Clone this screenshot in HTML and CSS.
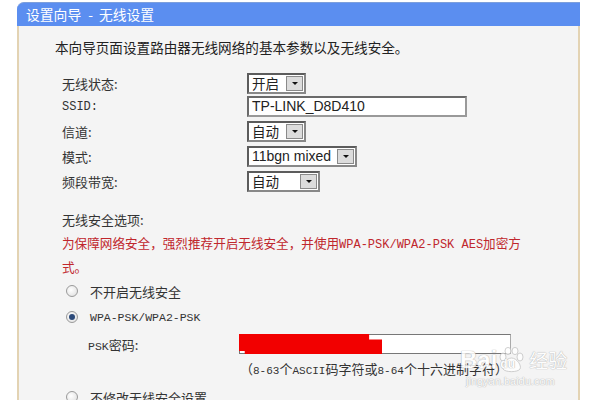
FILE: index.html
```html
<!DOCTYPE html>
<html lang="zh-CN">
<head>
<meta charset="utf-8">
<link rel="stylesheet" href="styles.css">
</head>
<body>
<div class="panel">
  <div class="title">设置向导<span class="dash">-</span>无线设置</div>
  <div class="body">
    <p class="intro">本向导页面设置路由器无线网络的基本参数以及无线安全。</p>
    <div class="form">
      <div class="row r1"><span class="lbl">无线状态:</span><span class="sel"><span class="val w1">开启</span><span class="btn"><i></i></span></span></div>
      <div class="row"><span class="lbl mono">SSID:</span><span class="txt">TP-LINK_D8D410</span></div>
      <div class="row"><span class="lbl">信道:</span><span class="sel"><span class="val w1">自动</span><span class="btn"><i></i></span></span></div>
      <div class="row"><span class="lbl">模式:</span><span class="sel"><span class="val w3">11bgn mixed</span><span class="btn"><i></i></span></span></div>
      <div class="row"><span class="lbl">频段带宽:</span><span class="sel"><span class="val w2">自动</span><span class="btn"><i></i></span></span></div>
    </div>
    <div class="sec">无线安全选项:</div>
    <div class="warn">为保障网络安全，强烈推荐开启无线安全，并使用<span class="mono">WPA-PSK/WPA2-PSK AES</span>加密方式。</div>
    <div class="opt"><span class="radio"></span><span>不开启无线安全</span></div>
    <div class="opt"><span class="radio on"></span><span class="mono">WPA-PSK/WPA2-PSK</span></div>
    <div class="psk"><span class="psklbl"><span class="mono">PSK</span>密码:</span><span class="pskbox"><span class="redact"></span></span></div>
    <div class="note">（<span class="mono">8-63</span>个<span class="mono">ASCII</span>码字符或<span class="mono">8-64</span>个十六进制字符）</div>
    <div class="opt last"><span class="radio"></span><span>不修改无线安全设置</span></div>
  </div>
</div>
<div class="wm">
  <div class="wm-top"><span class="wm-bai">Bai</span><span class="paw-wrap"><svg class="paw" width="28" height="26" viewBox="0 0 26 26"><ellipse cx="5" cy="10" rx="3" ry="4" /><ellipse cx="10" cy="4" rx="3" ry="3.6"/><ellipse cx="17" cy="4" rx="3" ry="3.6"/><ellipse cx="22" cy="10" rx="3" ry="4"/><path d="M13.5 11 C8 11 3 19 5 22 C7 25.5 20 25.5 22 22 C24 19 19 11 13.5 11 Z"/></svg><span class="du">du</span></span><span class="wm-jy">经验</span></div>
  <div class="wm-url">jingyan.baidu.com</div>
</div>
</body>
</html>
```
FILE: styles.css
```css
html, body { margin: 0; padding: 0; }
body {
  width: 600px; height: 400px; overflow: hidden; background: #fff;
  font-family: "Noto Sans CJK SC", "Noto Sans", sans-serif;
  color: #333; position: relative;
}
.mono { font-family: "Liberation Mono", "DejaVu Sans Mono", monospace; }
.panel { margin-left: 17px; width: 563px; padding-top: 2px; }
.title {
  height: 24px; line-height: 23px; background: #5b8ef0; color: #fff;
  font-size: 13.8px; padding-left: 9px; border-radius: 7px 0 0 0;
  border-top: 1px solid #7d9fdc; box-sizing: border-box;
}
.dash { margin: 0 6px 0 7px; }
.body {
  background: #f4f4f4; border-left: 2px solid #e3d3b3; border-right: 2px solid #e3d3b3;
  height: 380px; padding-left: 36px; font-size: 13px;
}
.intro { margin: 0; padding-top: 11px; line-height: 20px; font-size: 13.6px; color: #222; }
.form { margin-top: 15px; padding-left: 7px; }
.row { display: flex; align-items: center; height: 25px; }
.row.r1 { height: 22px; }
.lbl { width: 185px; color: #333; }
.lbl.mono { font-size: 12px; }
.sel {
  display: inline-flex; height: 21px; box-sizing: border-box; border: 2px solid #5c5c5c;
  border-right-color: #888; border-bottom-color: #888; background: #fff; align-items: stretch;
}
.val { font-size: 13.5px; line-height: 17px; padding-left: 3px; color: #222; }
.val.w1 { width: 33px; }
.val.w2 { width: 47px; }
.val.w3 { width: 84px; font-family: "Liberation Sans", Arial, sans-serif; font-size: 14px; }
.btn {
  width: 15px; background: #dcdcdc; border: 1px solid #8a8a8a; margin: 1px;
  display: flex; align-items: center; justify-content: center;
}
.btn i { width: 0; height: 0; border-left: 3px solid transparent; border-right: 3px solid transparent; border-top: 3px solid #111; }
.txt {
  width: 220px; height: 21px; box-sizing: border-box; border: 2px solid #6a6a6a;
  border-right-color: #999; border-bottom-color: #999; background: #fff;
  font-family: "Liberation Sans", Arial, sans-serif; font-size: 14px; line-height: 17px; padding-left: 3px; color: #222;
}
.sec { margin-top: 16px; padding-left: 7px; line-height: 20px; color: #333; }
.warn { padding-left: 7px; padding-right: 40px; line-height: 22px; margin-top: 2px; color: #c0272d; font-size: 12.6px; }
.warn .mono { font-size: 12px; }
.opt { display: flex; align-items: center; height: 26px; padding-left: 11px; }
.opt.last { margin-top: 2px; }
.opt .mono { font-size: 11.5px; }
.radio {
  width: 12px; height: 12px; border-radius: 50%; box-sizing: border-box;
  border: 1px solid #9a9a9a; background: radial-gradient(circle at 40% 40%, #fff, #dcdcdc);
  margin-right: 12px; position: relative;
}
.radio.on::after {
  content: ""; position: absolute; left: 2px; top: 2px; width: 6px; height: 6px; border-radius: 50%;
  background: #2c4a7a;
}
.psk { display: flex; align-items: center; height: 26px; padding-left: 33px; margin-top: 1px; }
.psklbl { width: 151px; }
.psklbl .mono { font-size: 11.5px; }
.pskbox {
  width: 272px; height: 20px; box-sizing: border-box; border: 1px solid #777; border-right-color: #aaa;
  background: #fff; display: flex;
}
.redact { width: 143px; height: 20px; margin: -1px 0 0 -1px; background: #f20000; clip-path: polygon(0 0, 91% 0, 91% 28%, 100% 28%, 100% 100%, 4% 100%, 4% 85%, 0 85%); }
.note { padding-left: 185px; line-height: 22px; color: #333; margin-top: 1px; }
.note .mono { font-size: 11px; }
.wm { position: absolute; left: 460px; top: 346px; color: #fff; text-shadow: 0 0 1px #aaa, 0 0 1px #aaa; opacity: 0.85; white-space: nowrap; }
.wm-top { display: flex; align-items: center; }
.wm-bai { font-family: "Liberation Sans", Arial, sans-serif; font-size: 24px; font-weight: bold; line-height: 26px; }
.paw-wrap { position: relative; display: inline-block; width: 28px; height: 26px; }
.paw { fill: #fff; stroke: #bbb; stroke-width: 0.8; display: block; }
.du { position: absolute; left: 3px; top: 10px; font-family: "Liberation Sans", Arial, sans-serif; font-size: 12px; font-weight: bold; line-height: 14px; color: #fff; }
.wm-jy { font-size: 19px; margin-left: 4px; }
.wm-url { font-family: "Liberation Sans", Arial, sans-serif; font-size: 11px; margin-left: 6px; margin-top: 2px; }
```
